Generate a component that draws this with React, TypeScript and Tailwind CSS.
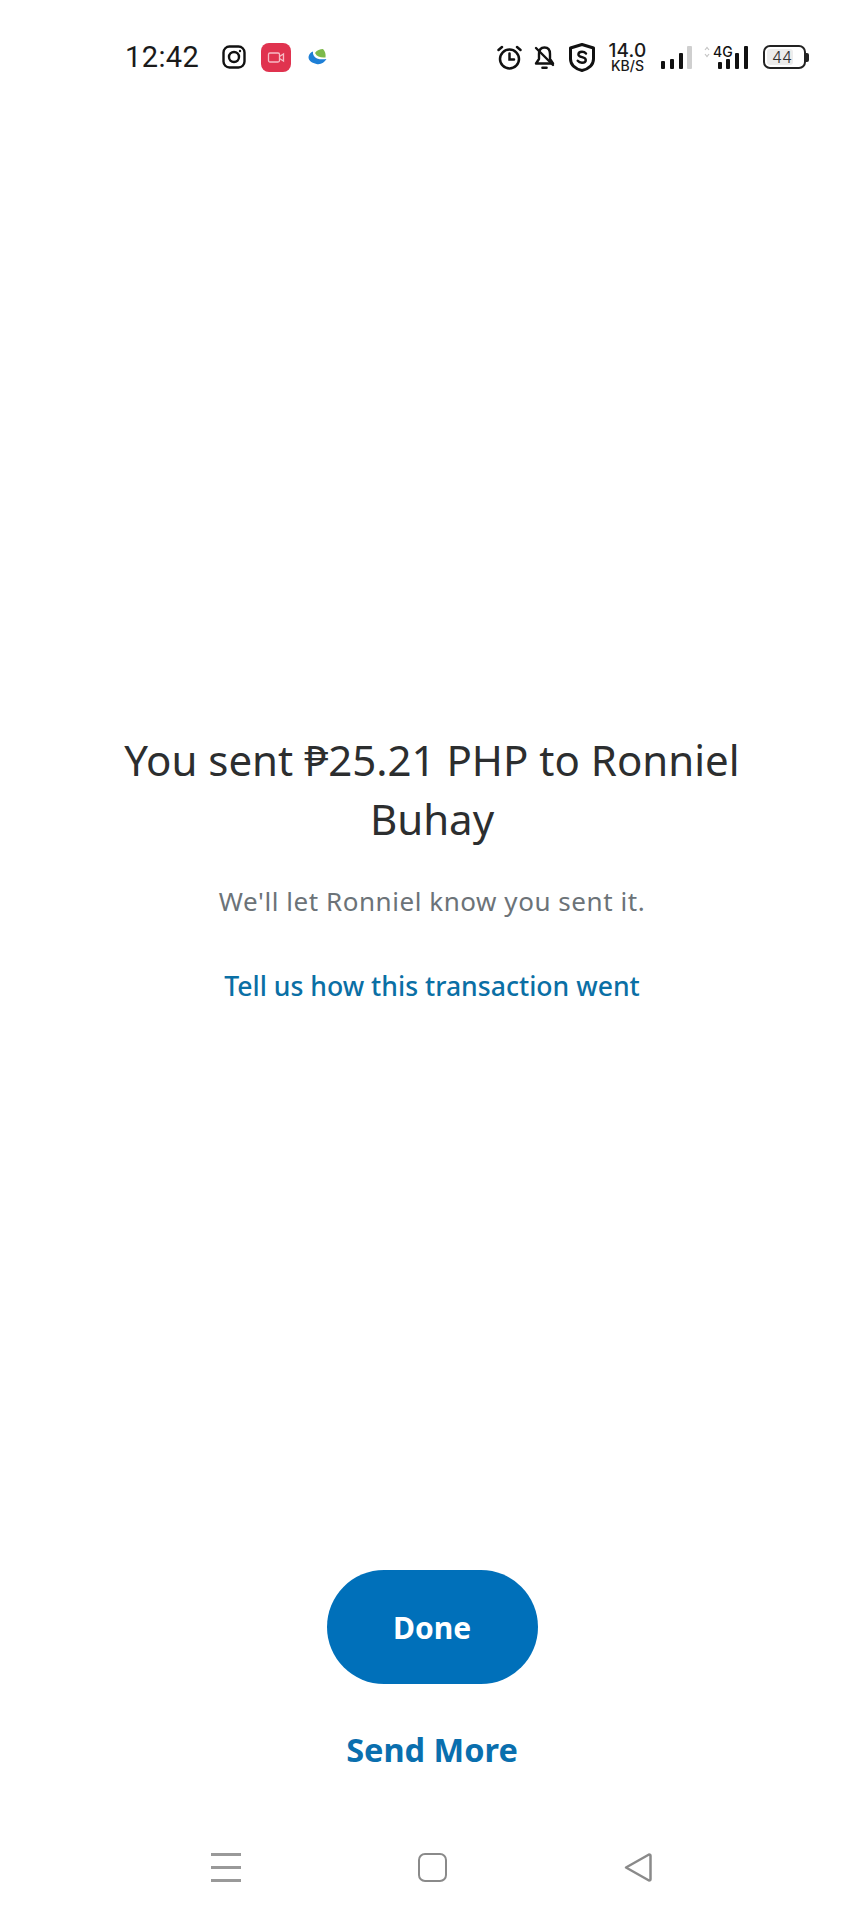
export default function App() {
  return (
    <div className="w-[864px] h-[1920px] bg-white flex flex-col items-stretch overflow-hidden font-['Noto_Sans',sans-serif]">
      <div className="h-[114px] shrink-0 flex items-center justify-between pl-[125px] pr-[55px]">
        <div className="flex items-center">
          <span className="w-[74px] text-[29px] leading-none text-[#1a1a1a] font-['Roboto',sans-serif] tracking-[0.4px]">12:42</span>
          <svg className="ml-[23px]" width="24" height="24" viewBox="0 0 24 24" fill="none" stroke="#111" strokeWidth="2.4">
            <rect x="1.500" y="1.500" width="21" height="21" rx="6" />
            <circle cx="12" cy="12" r="5" />
            <circle cx="18" cy="6" r="1.200" fill="#111" stroke="none" />
          </svg>
          <svg className="ml-[15px]" width="30" height="29" viewBox="0 0 30 29" fill="none">
            <rect width="30" height="29" rx="8" fill="#e0334f" />
            <rect x="7.500" y="10" width="11" height="9" rx="1.500" stroke="#f7bcc6" strokeWidth="1.300" />
            <path d="M18.500 13.500l4-2.500v7l-4-2.500" stroke="#f7bcc6" strokeWidth="1.300" />
          </svg>
          <svg className="ml-[17px]" width="19" height="16" viewBox="0 0 19 16" fill="none">
            <path d="M0.500 8C1 5 2.500 3.500 5 2.500c-.5 3 1 5.500 4 7 3 1 6 1 9.500.5-2 3.500-6 6-10 5-4-1-8-3-8-7z" fill="#1e7fd6" />
            <path d="M7 4c2-3 5-4 8-4 2 2 3 5 2.500 8.500C13 9 9 8 7 4z" fill="#7cb94a" />
          </svg>
        </div>
        <div className="flex items-center">
          <svg width="25" height="25" viewBox="0 0 25 25" fill="none" stroke="#111" strokeWidth="2.500" strokeLinecap="round">
            <circle cx="12.500" cy="14" r="9.500" />
            <path d="M12.500 8.500V14.500H17" />
            <path d="M1.500 5L5 2M23.500 5L20 2" />
          </svg>
          <svg className="ml-[12px]" width="21" height="25" viewBox="0 0 21 25" fill="none" stroke="#111" strokeWidth="2.400" strokeLinecap="round" strokeLinejoin="round">
            <path d="M5 9c0-4 2-6.500 5.500-6.500S16 5 16 9v5l3 4.500H2L5 14z" />
            <path d="M2 3l17 17" />
            <path d="M8.500 22.800h4" strokeWidth="2.600" />
          </svg>
          <svg className="ml-[14px]" width="26" height="29" viewBox="0 0 26 29" fill="none">
            <path d="M13 1.500L24.500 5v11c0 6-5 10-11.500 11.500C6.500 26 1.500 22 1.500 16V5z" stroke="#111" strokeWidth="3" strokeLinejoin="round" />
            <path d="M17 10.500c-1-1.200-2.500-1.700-4-1.700-2 0-3.600 1-3.600 2.700 0 3.500 7.400 1.800 7.400 5.400 0 1.800-1.700 2.800-3.800 2.800-1.700 0-3.300-.6-4.300-1.900" stroke="#111" strokeWidth="2.400" strokeLinecap="round" />
          </svg>
          <div className="ml-[14px] w-[37px] flex flex-col items-center text-[#1a1a1a] font-['Inter',sans-serif]">
            <span className="text-[19px] leading-[18px] font-medium tracking-[0.2px]">14.0</span>
            <span className="text-[14px] leading-[12px] font-medium">KB/S</span>
          </div>
          <svg className="ml-[15px]" width="31" height="23" viewBox="0 0 31 23">
            <rect x="0" y="15" width="4" height="8" rx="1" fill="#111" />
            <rect x="9" y="13" width="4" height="10" rx="1" fill="#111" />
            <rect x="18" y="7" width="4" height="16" rx="1" fill="#111" />
            <rect x="26" y="0" width="5" height="23" rx="1" fill="#cfcfcf" />
          </svg>
          <div className="ml-[12px] relative w-[44px] h-[23px]">
            <svg width="44" height="23" viewBox="0 0 44 23">
              <path d="M1 4l2-2.500L5 4M1 8l2 2.500L5 8" fill="none" stroke="#c4c4c4" strokeWidth="1.200" />
              <rect x="14" y="16" width="4" height="7" rx="1" fill="#111" />
              <rect x="22" y="13" width="4" height="10" rx="1" fill="#111" />
              <rect x="31" y="7" width="4" height="16" rx="1" fill="#111" />
              <rect x="40" y="0" width="4" height="23" rx="1" fill="#111" />
            </svg>
            <span className="absolute left-[9px] -top-[1px] text-[14px] leading-[14px] font-medium text-[#111] font-['Inter',sans-serif]">4G</span>
          </div>
          <div className="ml-[15px] flex items-center">
            <div className="relative w-[43px] h-[24px] border-2 border-[#222] rounded-[7px] p-[2px] flex">
              <div className="w-[26px] h-full bg-[#ececec] rounded-[3px]" />
              <span className="absolute left-[7px] top-[1px] text-[16px] leading-[18px] font-light text-[#333] font-['Inter',sans-serif]">44</span>
            </div>
            <div className="w-[3px] h-[9px] bg-[#222] rounded-r-[2px]" />
          </div>
        </div>
      </div>

      <div className="flex flex-col items-center mt-[616px] px-[100px] text-center">
        <h1 className="text-[42px] leading-[59px] text-[#2c2e2f] font-normal">You sent ₱25.21 PHP to Ronniel Buhay</h1>
        <p className="mt-[35px] text-[26px] leading-[36px] text-[#6c7378] tracking-[0.55px]">We'll let Ronniel know you sent it.</p>
        <a className="mt-[49px] text-[26.600px] leading-[36px] font-medium text-[#0a6fa5]">Tell us how this transaction went</a>
      </div>

      <div className="flex-1" />

      <div className="flex flex-col items-center">
        <button className="w-[211px] h-[114px] rounded-full bg-[#0070ba] text-white text-[30px] font-bold">Done</button>
        <a className="mt-[44px] text-[32.500px] leading-[44px] font-bold text-[#0a6fae]">Send More</a>
      </div>

      <div className="mt-[81px] mb-[38px] flex items-center justify-between pl-[211px] pr-[211px]">
        <div className="w-[30px] h-[29px] flex flex-col justify-between">
          <div className="h-[3px] bg-[#999999]" />
          <div className="h-[3px] bg-[#999999]" />
          <div className="h-[3px] bg-[#999999]" />
        </div>
        <div className="w-[29px] h-[29px] border-[2.500px] border-[#8a8a8a] rounded-[7px]" />
        <svg width="29" height="29" viewBox="0 0 29 29" fill="none" stroke="#8a8a8a" strokeWidth="2.500" strokeLinejoin="round">
          <path d="M2 14.500L25 1.500c1 0 1.500.5 1.500 1.500v23c0 1-.5 1.500-1.500 1.500z" />
        </svg>
      </div>
    </div>
  );
}
